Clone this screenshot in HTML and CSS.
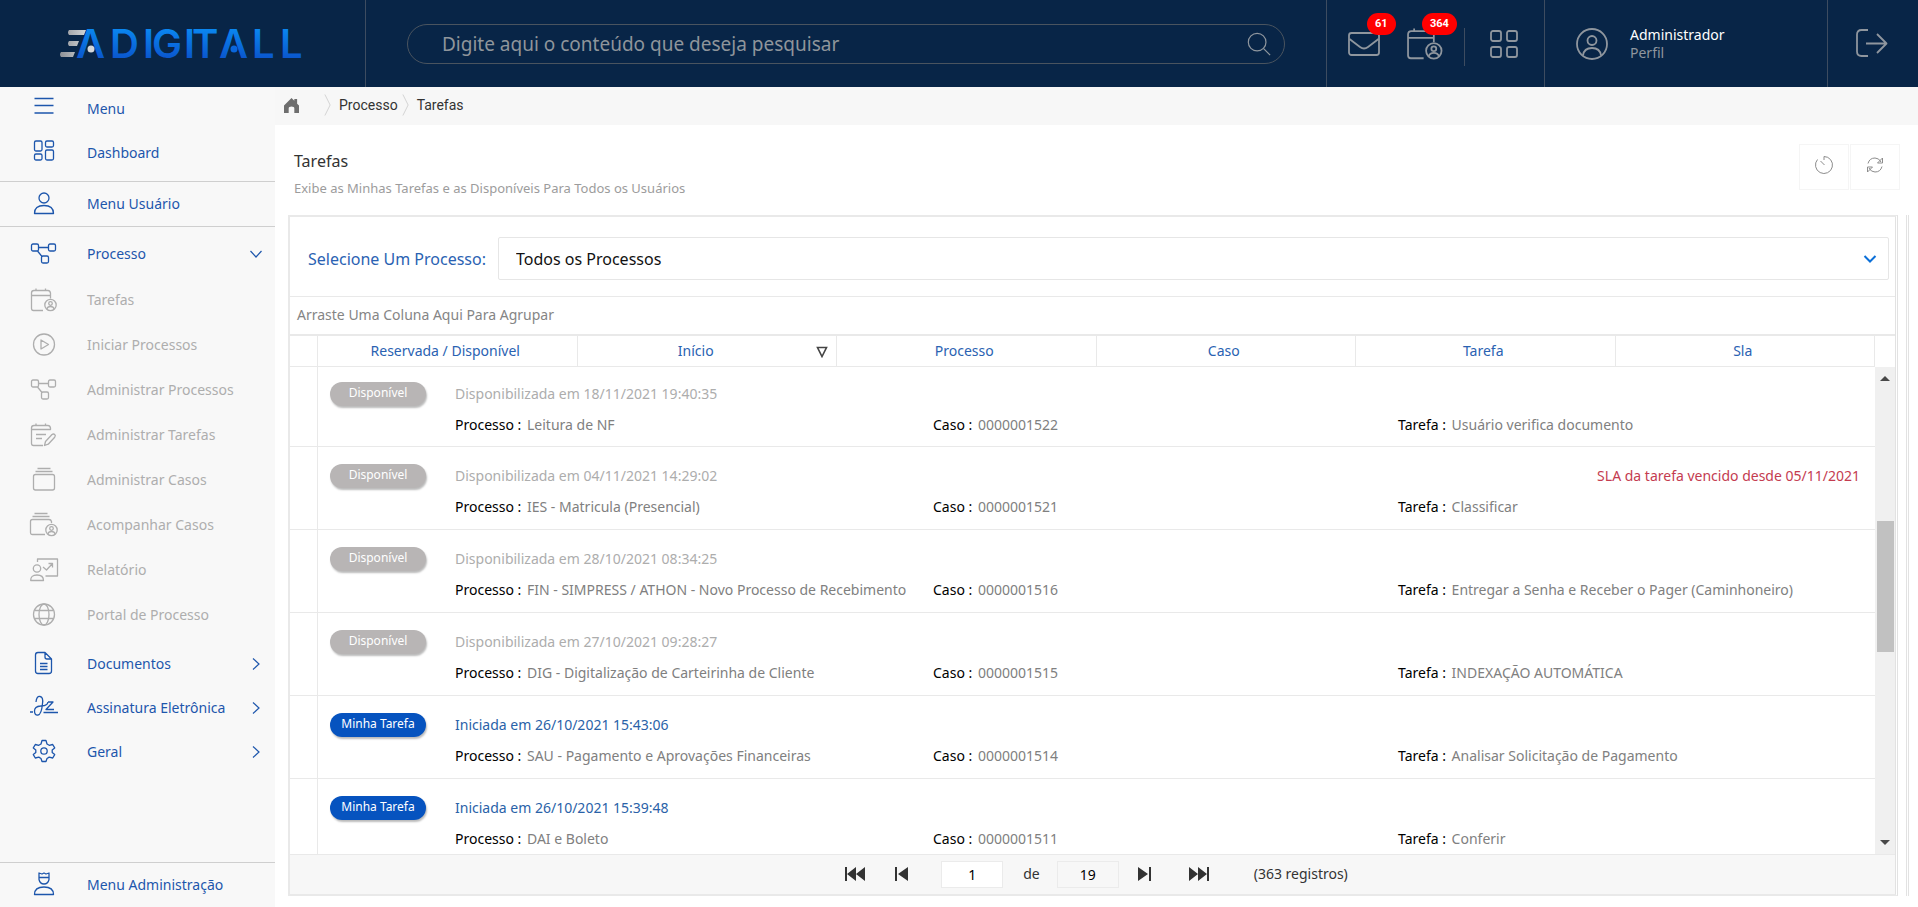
FILE: index.html
```html
<!DOCTYPE html>
<html lang="pt-BR">
<head>
<meta charset="utf-8">
<title>Adigitall - Tarefas</title>
<link rel="stylesheet" href="styles.css">
</head>
<body>
<svg class="defs" aria-hidden="true">
  <symbol id="i-process" viewBox="0 0 28 28"><rect x="1.5" y="4" width="7" height="7" rx="1.5"/><rect x="18.5" y="4" width="7" height="7" rx="1.5"/><rect x="11.5" y="16" width="7" height="7" rx="1.5"/><path d="M8.5 7.5h10M7.5 11l4.5 5.5"/></symbol>
  <symbol id="i-task" viewBox="0 0 28 28"><path d="M13 24.500H3.500q-2 0-2-2V7q0-2.500 2.500-2.500h14q2 0 2.500 2.500v2.500h-19M6 2.500v2M15.500 2.500v2M20.500 9.500v3"/><circle cx="20.500" cy="19" r="5.700"/><circle cx="20.500" cy="17.500" r="1.800"/><path d="M16.800 23q.700-2.500 3.700-2.500t3.700 2.500"/></symbol>
  <symbol id="i-person" viewBox="0 0 28 28"><circle cx="14" cy="8" r="5"/><path d="M4.500 23.500h19q0-8-9.500-8t-9.500 8z"/></symbol>
  <symbol id="i-chev" viewBox="0 0 14 14"><path d="M4 1.500 10 7l-6 5.500"/></symbol>
</svg>

<header class="topbar">
  <div class="brand">
    <svg class="logo" viewBox="0 0 248 32" role="img" aria-label="Adigitall">
      <defs>
        <linearGradient id="g-blue" x1="0" y1="0" x2="0" y2="1"><stop offset="0.2" stop-color="#0a86f0"/><stop offset="0.9" stop-color="#0a4fc8"/></linearGradient>
        <linearGradient id="g-gray" x1="0" y1="0" x2="1" y2="0"><stop offset="0" stop-color="#8d9096"/><stop offset="1" stop-color="#d2d4d6"/></linearGradient>
      </defs>
      <path class="bar" d="M10 2h17l-2 5H10q-2-2.500 0-5zM10 13h10l-2 5H10q-2-2.500 0-5zM2 24h14l-2 5H2q-2-2.500 0-5z"/>
      <text class="wordmark" y="30" x="17 51 84 93 125 133 160 193 221">ΛDIGITΛLL</text>
      <circle class="dot" cx="32" cy="21" r="3.500"/><circle class="dot-blue" cx="175" cy="21" r="3.500"/>
    </svg>
  </div>
  <form class="search">
    <label class="search-box">
      <input type="text" aria-label="Pesquisar" placeholder="Digite aqui o conteúdo que deseja pesquisar">
      <svg class="ico search-ico" viewBox="0 0 28 28"><circle cx="12" cy="12" r="9.500"/><path d="m19 19 7 7"/></svg>
    </label>
  </form>
  <div class="quick">
    <button class="qbtn" aria-label="Mensagens"><svg class="ico q32" viewBox="0 0 32 32"><rect x="1" y="5" width="30" height="22" rx="2.500"/><path d="m1.500 11 10.500 8q4 3 8 0l10.500-8"/></svg><span class="count">61</span></button>
    <button class="qbtn" aria-label="Tarefas"><svg class="ico q38"><use href="#i-task"/></svg><span class="count">364</span></button>
    <span class="qsep"></span>
    <button class="qbtn apps" aria-label="Aplicativos"><svg class="ico q28" viewBox="0 0 28 28"><rect x="1" y="1" width="10" height="10" rx="2"/><rect x="17" y="1" width="10" height="10" rx="2"/><rect x="1" y="17" width="10" height="10" rx="2"/><rect x="17" y="17" width="10" height="10" rx="2"/></svg></button>
  </div>
  <div class="account">
    <svg class="ico q32" viewBox="0 0 32 32"><circle cx="16" cy="16" r="15"/><circle cx="16" cy="12.500" r="4.500"/><path d="M7 27.500q1-7.500 9-7.500t9 7.500"/></svg>
    <div><div class="who">Administrador</div><div class="role">Perfil</div></div>
  </div>
  <div class="leave"><button class="qbtn" aria-label="Sair"><svg class="ico q32" viewBox="0 0 32 32"><path d="M12 2H5.500Q1 2 1 6.500v17Q1 28 5.500 28H12M10 15.500h20M21 6l9.500 9.500-9.500 9.500"/></svg></button></div>
</header>

<div class="shell">
  <nav class="side">
    <a class="item" href="#"><svg class="ico"><path d="M4.500 3.500h19M4.500 10.500h19M4.500 18h19"/></svg><span>Menu</span></a>
    <a class="item" href="#"><svg class="ico"><rect x="4.500" y="2" width="7.500" height="10" rx="1.500"/><rect x="15.500" y="2" width="8" height="6" rx="1.500"/><rect x="4.500" y="15" width="7.500" height="6" rx="1.500"/><rect x="15.500" y="11" width="8" height="10" rx="1.500"/></svg><span>Dashboard</span></a>
    <a class="item boxed" href="#"><svg class="ico"><use href="#i-person"/></svg><span>Menu Usuário</span></a>
    <a class="item" href="#"><svg class="ico"><use href="#i-process"/></svg><span>Processo</span><svg class="chev open"><use href="#i-chev"/></svg></a>
    <div class="sub">
      <a class="item" href="#"><svg class="ico"><use href="#i-task"/></svg><span>Tarefas</span></a>
      <a class="item" href="#"><svg class="ico"><circle cx="14" cy="13.500" r="10.500"/><path d="m11 9 7.500 4.500L11 18z"/></svg><span>Iniciar Processos</span></a>
      <a class="item" href="#"><svg class="ico"><use href="#i-process"/></svg><span>Administrar Processos</span></a>
      <a class="item" href="#"><svg class="ico"><path d="M13 24.500H3.500q-2 0-2-2V7q0-2.500 2.500-2.500h14q2 0 2.500 2.500v1.500h-19M6 2.500v2M15.500 2.500v2M6 13.500h10M6 17.500h6"/><path d="m15.500 20.500 6.500-7q1.500-1 2.700 0t0 2.700l-6.500 7-3.700 1.300z"/></svg><span>Administrar Tarefas</span></a>
      <a class="item" href="#"><svg class="ico"><rect x="3.500" y="8.500" width="21" height="15.500" rx="2"/><path d="M5.500 5.500h17M7.500 2.500h13"/></svg><span>Administrar Casos</span></a>
      <a class="item" href="#"><svg class="ico"><path d="M15 23.500H2.500q-2 0-2-2v-11q0-2 2-2H19q2 0 2.500 2V12M2.500 5.500h17M4.500 2.500h13"/><circle cx="21.500" cy="19" r="5.700"/><circle cx="21.500" cy="17.500" r="1.800"/><path d="M17.800 23q.700-2.500 3.700-2.500t3.700 2.500"/></svg><span>Acompanhar Casos</span></a>
      <a class="item" href="#"><svg class="ico"><circle cx="7" cy="12.500" r="3.700"/><path d="M.700 24.500h12.800q0-5.500-6.500-5.500T.700 24.500zM7.500 6V3h20v17H15.500M13 11l3.500 3 6-6.500M18.500 7.500h4v4"/></svg><span>Relatório</span></a>
      <a class="item" href="#"><svg class="ico"><circle cx="14" cy="13.500" r="10.500"/><ellipse cx="14" cy="13.500" rx="5" ry="10.500"/><path d="M4.500 9.500h19M4.500 17.500h19"/></svg><span>Portal de Processo</span></a>
    </div>
    <a class="item" href="#"><svg class="ico"><path d="M15 2.500H8Q5.500 2.500 5.500 5v16q0 2.500 2.500 2.500h11q2.500 0 2.500-2.500V9zM15 2.500V7q0 2 2 2h4.500M10 13.500h7.500M10 16.500h7.500M10 19.500h7.500"/></svg><span>Documentos</span><svg class="chev"><use href="#i-chev"/></svg></a>
    <a class="item" href="#"><svg class="ico"><path d="M6 8q.500-6 4-5.500t2.500 7Q11.500 20.500 8 21t-3.500-4q0-4.500 6-5l4-.500q3-.500 3.500-3.500M18 8h5l-7 7.500h8M0 18h3M13.500 18.500H28"/></svg><span>Assinatura Eletrônica</span><svg class="chev"><use href="#i-chev"/></svg></a>
    <a class="item" href="#"><svg class="ico"><circle cx="14" cy="13" r="3.200"/><path d="M12 2.500h4l1 3.500 2.200 1.300 3.500-.800 2 3.400-2.500 2.100v2.500l2.500 2.100-2 3.400-3.500-.900L17 20.500 16 23.500h-4l-1-3-2.200-1.400-3.500.900-2-3.400L5.800 14.500V12L3.300 9.900l2-3.400 3.500.800L11 6z"/></svg><span>Geral</span><svg class="chev"><use href="#i-chev"/></svg></a>
    <a class="item admin" href="#"><svg class="ico"><path d="m9 2 3 1 2-1 2 1 3-1v6.500q-1 4.500-5 4.500T9 8.500zM9 6.500h10M4.500 23.500h19q0-7.500-9.500-7.500t-9.500 7.500z"/></svg><span>Menu Administração</span></a>
  </nav>

  <main class="main">
    <nav class="crumbs" aria-label="Trilha">
      <a href="#" aria-label="Início"><svg class="home" viewBox="0 0 16 16"><path d="M8 0 0 8v8h5v-5q0-2 3-2t3 2v5h5V8l-2-2V1h-3v2z"/></svg></a>
      <svg class="arrow" viewBox="0 0 8 24"><path d="m1 0 6 12-6 12"/></svg>
      <a href="#">Processo</a>
      <svg class="arrow" viewBox="0 0 8 24"><path d="m1 0 6 12-6 12"/></svg>
      <a href="#">Tarefas</a>
    </nav>
    <div class="heading">
      <div><h1>Tarefas</h1><p>Exibe as Minhas Tarefas e as Disponíveis Para Todos os Usuários</p></div>
      <div class="tools">
        <button aria-label="Temporizador"><svg viewBox="0 0 20 20"><path d="M10 5V1.500a8.500 8.500 0 1 1-6.500 3M6.500 6l4 4"/></svg></button>
        <button aria-label="Atualizar"><svg viewBox="0 0 20 20"><path d="M3 8.500q1.500-5.500 7-5.500 4 0 6 4M17.500 3v5h-5zM17 11.500Q15.500 17 10 17q-4 0-6-4M2.500 17v-5h5z"/></svg></button>
      </div>
    </div>
    <div class="content">
      <section class="panel">
        <div class="filter">
          <label for="proc">Selecione Um Processo:</label>
          <div class="select"><select id="proc"><option>Todos os Processos</option></select><svg viewBox="0 0 14 10"><path d="m1.500 2 5.500 5.500L12.500 2"/></svg></div>
        </div>
        <div class="group">Arraste Uma Coluna Aqui Para Agrupar</div>
        <table class="heads">
          <thead><tr><th class="grip"></th><th>Reservada / Disponível</th><th><span class="sorted">Início<svg viewBox="0 0 12 12"><path d="M1.500 1.500h9L6 10.500z"/></svg></span></th><th>Processo</th><th>Caso</th><th>Tarefa</th><th>Sla</th></tr></thead>
        </table>
        <div class="body">
          <div class="rows">
            <table class="list"><tbody>
              <tr><td class="grip"></td><td><div class="row"><span class="tag">Disponível</span><span class="when">Disponibilizada em 18/11/2021 19:40:35</span><span class="f1"><b>Processo :</b> Leitura de NF</span><span class="f2"><b>Caso :</b> 0000001522</span><span class="f3"><b>Tarefa :</b> Usuário verifica documento</span></div></td></tr>
              <tr><td class="grip"></td><td><div class="row"><span class="tag">Disponível</span><span class="when">Disponibilizada em 04/11/2021 14:29:02</span><span class="late">SLA da tarefa vencido desde 05/11/2021</span><span class="f1"><b>Processo :</b> IES - Matricula (Presencial)</span><span class="f2"><b>Caso :</b> 0000001521</span><span class="f3"><b>Tarefa :</b> Classificar</span></div></td></tr>
              <tr><td class="grip"></td><td><div class="row"><span class="tag">Disponível</span><span class="when">Disponibilizada em 28/10/2021 08:34:25</span><span class="f1"><b>Processo :</b> FIN - SIMPRESS / ATHON - Novo Processo de Recebimento</span><span class="f2"><b>Caso :</b> 0000001516</span><span class="f3"><b>Tarefa :</b> Entregar a Senha e Receber o Pager (Caminhoneiro)</span></div></td></tr>
              <tr><td class="grip"></td><td><div class="row"><span class="tag">Disponível</span><span class="when">Disponibilizada em 27/10/2021 09:28:27</span><span class="f1"><b>Processo :</b> DIG - Digitalização de Carteirinha de Cliente</span><span class="f2"><b>Caso :</b> 0000001515</span><span class="f3"><b>Tarefa :</b> INDEXAÇÃO AUTOMÁTICA</span></div></td></tr>
              <tr><td class="grip"></td><td><div class="row mine"><span class="tag">Minha Tarefa</span><span class="when">Iniciada em 26/10/2021 15:43:06</span><span class="f1"><b>Processo :</b> SAU - Pagamento e Aprovações Financeiras</span><span class="f2"><b>Caso :</b> 0000001514</span><span class="f3"><b>Tarefa :</b> Analisar Solicitação de Pagamento</span></div></td></tr>
              <tr><td class="grip"></td><td><div class="row mine"><span class="tag">Minha Tarefa</span><span class="when">Iniciada em 26/10/2021 15:39:48</span><span class="f1"><b>Processo :</b> DAI e Boleto</span><span class="f2"><b>Caso :</b> 0000001511</span><span class="f3"><b>Tarefa :</b> Conferir</span></div></td></tr>
            </tbody></table>
          </div>
          <div class="scroll" aria-hidden="true"><i class="up"></i><i class="track-a"></i><i class="thumb"></i><i class="track-b"></i><i class="down"></i></div>
        </div>
        <div class="pager">
          <button class="far" aria-label="Primeira"><svg width="20" height="14"><path d="M0 0h2v14H0zM11 0v14L2 7zM20 0v14l-9-7z"/></svg></button>
          <button aria-label="Anterior"><svg width="13" height="14"><path d="M0 0h2v14H0zM13 0v14L3 7z"/></svg></button>
          <input type="text" aria-label="Página" value="1">
          <span class="of">de</span>
          <input type="text" class="total" aria-label="Total de páginas" value="19" readonly>
          <button aria-label="Próxima"><svg width="13" height="14"><path d="M11 0h2v14h-2zM0 0v14l10-7z"/></svg></button>
          <button class="far last" aria-label="Última"><svg width="20" height="14"><path d="M18 0h2v14h-2zM9 0v14l9-7zM0 0v14l9-7z"/></svg></button>
          <span class="recs">(363 registros)</span>
        </div>
      </section>
      <div class="rail"></div>
    </div>
  </main>
</div>
</body>
</html>
```
FILE: styles.css
```css
* { box-sizing: border-box; }
body {
  margin: 0;
  height: 100vh;
  display: flex;
  flex-direction: column;
  overflow: hidden;
  font: 14px/20px "Noto Sans", "Open Sans", sans-serif;
  color: #333;
  background: #fff;
}
a { color: inherit; text-decoration: none; }
button { border: 0; padding: 0; background: none; font: inherit; color: inherit; cursor: pointer; }
svg { display: block; }
.defs { position: absolute; width: 0; height: 0; }
.ico { flex: none; width: 28px; height: 28px; fill: none; stroke: currentColor; stroke-width: 1.3; stroke-linejoin: round; overflow: visible; }

/* top bar */
.topbar { flex: none; display: flex; height: 87px; background: #082547; color: #8f969e; }
.topbar > * { display: flex; align-items: center; border-right: 1px solid #3d4c60; }
.topbar > .leave { border-right: 0; }
.brand { width: 366px; padding-left: 59px; }
.logo { width: 248px; height: 32px; overflow: visible; }
.bar { fill: url(#g-gray); }
.wordmark { font: 600 40px Inter, sans-serif; fill: url(#g-blue); }
.dot { fill: #d5d7da; }
.dot-blue { fill: #0a66dc; }
.search { flex: 1; padding: 0 41px; }
.search-box { flex: 1; display: flex; align-items: center; height: 40px; padding: 0 12px 0 34px; border: 1px solid #4a545f; border-radius: 20px; }
.search-box input { flex: 1; min-width: 0; border: 0; outline: 0; padding: 0; background: none; color: #fff; font: 19px/26px "Noto Sans", sans-serif; }
.search-box input::placeholder { color: #8f959b; opacity: 1; }
.search-ico { width: 26px; height: 26px; }
.quick { width: 218px; padding-left: 21px; }
.qbtn { position: relative; }
.q32 { width: 32px; height: 32px; }
.q38 { width: 38px; height: 38px; }
.q28 { width: 28px; height: 28px; }
.quick .ico, .account .ico, .leave .ico { stroke-width: 1.8; }
.quick .q38 { stroke-width: 1.3; }
.quick .qbtn + .qbtn { margin-left: 26px; }
.count { position: absolute; left: 19px; top: -15px; height: 22px; min-width: 28px; padding: 0 8px; border-radius: 11px; background: #f00; color: #fff; font: bold 11px/22px Roboto, sans-serif; }
.q38 + .count { left: 16px; top: -12px; }
.qsep { width: 1px; height: 38px; margin: 6px 25px 0 20px; background: #3d4c60; }
.account { width: 283px; padding-left: 31px; gap: 22px; }
.who { color: #fff; line-height: 18px; }
.role { line-height: 18px; }
.leave { width: 90px; padding-left: 28px; }

/* side menu */
.shell { flex: 1; min-height: 0; display: flex; }
.side { flex: none; width: 275px; display: flex; flex-direction: column; background: #f8f8f8; color: #1d56ac; }
.item { flex: none; display: flex; align-items: center; height: 44px; padding: 0 12px 0 30px; gap: 29px; white-space: nowrap; }
.item > span { flex: 1; min-width: 0; }
.item > .chev { margin-left: -29px; }
.boxed { height: 46px; margin: 6px 0 5px; border: solid #cfcfcf; border-width: 1px 0; }
.sub { padding: 1px 0 5px; color: #aeaeae; }
.sub .item { height: 45px; }
.chev { width: 14px; height: 14px; fill: none; stroke: currentColor; stroke-width: 1.2; }
.open { transform: rotate(90deg); }
.admin { height: 45px; margin-top: auto; border-top: 1px solid #cfcfcf; }

/* main area */
.main { flex: 1; min-width: 0; display: flex; flex-direction: column; }
.crumbs { flex: none; display: flex; align-items: center; gap: 8px; height: 38px; padding: 0 0 2px 9px; background: #f7f7f7; font: 14px/20px Roboto, sans-serif; }
.home { width: 15px; height: 15px; margin-right: 17px; fill: #6e6e6e; }
.arrow { width: 7px; height: 24px; fill: none; stroke: #d0d0d0; }
.arrow + a { margin-right: -4px; }
.heading { flex: none; display: flex; justify-content: space-between; height: 90px; padding: 19px 18px 0 19px; }
h1 { margin: 6px 0 6px; font-size: 16px; line-height: 22px; font-weight: 400; }
p { margin: 0; font-size: 13px; color: #9c9c9c; }
.tools { display: flex; gap: 1px; }
.tools button { width: 50px; height: 46px; padding: 0 14px 4px; border: 1px solid #f5f5f5; }
.tools svg { width: 20px; height: 20px; fill: none; stroke: #8c8c8c; }
.content { flex: 1; min-height: 0; display: flex; gap: 8px; padding: 0 9px 11px 13px; }
.panel { flex: 1; min-width: 0; display: flex; flex-direction: column; border: 2px solid #e9e9e9; border-right: 3px double #e2e2e2; }
.rail { width: 3px; border-left: 3px double #e2e2e2; }
.filter { flex: none; display: flex; align-items: center; gap: 12px; height: 80px; padding: 4px 6px 0 18px; border-bottom: 1px solid #e9e9e9; font-size: 16px; color: #2a62b2; }
.select { flex: 1; position: relative; }
.select select { display: block; width: 100%; height: 43px; padding: 0 17px; border: 1px solid #e6e6e6; border-radius: 2px; background: #fff; color: #111; font: inherit; appearance: none; }
.select svg { position: absolute; right: 12px; top: 17px; width: 14px; height: 10px; fill: none; stroke: #0b6fd8; stroke-width: 2; pointer-events: none; }
.group { flex: none; height: 39px; padding: 0 7px; line-height: 36px; border-bottom: 2px solid #e9e9e9; color: #858585; }
table { border-collapse: separate; border-spacing: 0; table-layout: fixed; width: 100%; }
.heads { flex: none; width: calc(100% - 20px); height: 31px; }
th { padding: 0 4px 0 0; font-weight: 400; color: #2a62b2; border: solid #e9e9e9; border-width: 0 1px 1px 0; }
.grip { width: 28px; padding: 0; border: solid #e9e9e9; border-width: 0 1px 1px 0; }
.sorted { position: relative; display: block; padding-right: 18px; }
.sorted svg { position: absolute; right: 4px; top: 5px; width: 12px; height: 12px; fill: none; stroke: #444; stroke-width: 1.6; }
.body { flex: 1; min-height: 0; display: flex; }
.rows { flex: 1; min-width: 0; overflow: hidden; }
.list td { height: 83px; padding: 0; border-bottom: 1px solid #e9e9e9; vertical-align: top; }
.list tr:first-child td { height: 80px; }
.row { display: grid; grid-template: 26px 36px / 125px 478px 465px 1fr; align-items: center; padding: 16px 15px 0 12px; color: #808080; white-space: nowrap; }
.list tr:first-child .row { padding-top: 14px; }
.row b { margin-right: 2px; font-weight: 400; color: #000; }
.tag { justify-self: start; width: 96px; height: 24px; border-radius: 12px; background: #b8b5b5; color: #fff; font-size: 12px; line-height: 21px; text-align: center; box-shadow: 1px 2px 2px #bbb; }
.when { grid-column: 2; color: #adadad; }
.late { grid-area: 1 / 4; justify-self: end; color: #c43c50; }
.f1 { grid-area: 2 / 2; }
.f2 { grid-area: 2 / 3; }
.f3 { grid-area: 2 / 4; }
.mine .tag { background: #0653bf; }
.mine .when { color: #2a62a8; }
.scroll { width: 20px; display: flex; flex-direction: column; align-items: center; padding: 9px 0; background: #f0f0f0; }
.up, .down { border: 5px solid transparent; border-top-width: 0; border-bottom-color: #484848; }
.down { border-width: 5px 5px 0; border-top-color: #484848; }
.track-a { flex: 141; }
.thumb { flex: 131; width: 17px; background: #c1c1c1; }
.track-b { flex: 189; }
.pager { flex: none; display: flex; align-items: center; justify-content: center; height: 40px; padding: 0 6px 1px 0; border-top: 1px solid #e9e9e9; background: #f7f7f7; }
.pager button { margin: 0 16px; }
.pager .far { margin: 0 14px; }
.pager .last { margin-left: 22px; }
.pager svg { fill: #333; }
.pager input { width: 62px; height: 27px; padding: 0; margin: 0 17px; border: 1px solid #ebebeb; background: #fff; color: #000; font: inherit; text-align: center; }
.pager .of { margin: 0 0 0 3px; }
.pager input.total { margin-right: 3px; background: #f7f7f7; }
.recs { margin-left: 31px; }
```
